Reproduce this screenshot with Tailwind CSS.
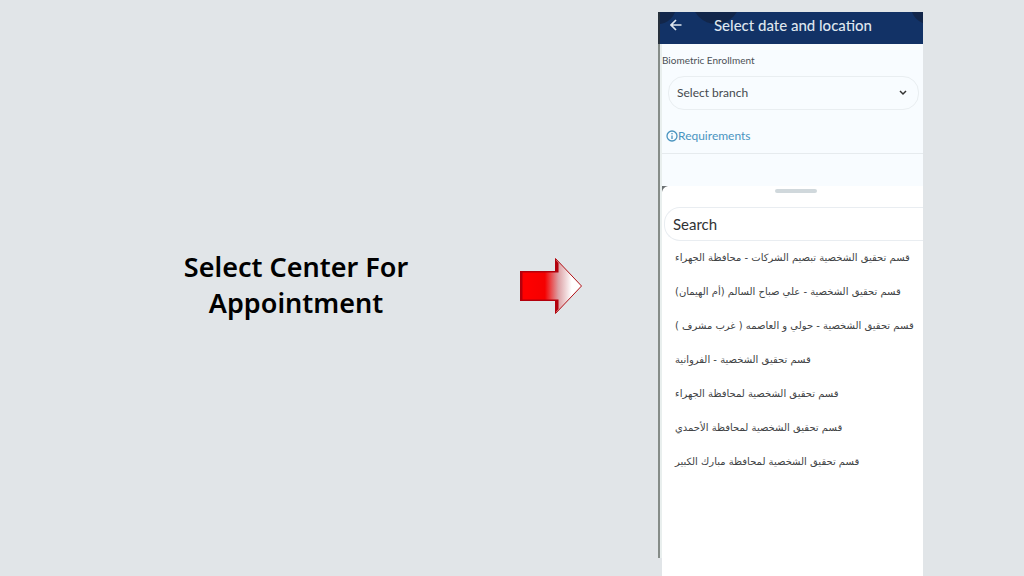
<!DOCTYPE html>
<html lang="en">
	<head>
		<meta charset="utf-8">
		<meta name="viewport" content="width=device-width, initial-scale=1">
		<title>Select Center For Appointment</title>
		<script src="https://cdn.jsdelivr.net/npm/@tailwindcss/browser@4"></script>
	</head>
	<body class="bg-[#e1e5e8] font-[Lato,sans-serif]">
		<main class="grid grid-cols-[1fr_62px_76px_265px_101px] min-h-screen">
			<h1 class="self-center pb-1.5 pl-[72px] text-center text-[27px] leading-9 font-semibold text-black font-['Noto_Sans',sans-serif]">Select Center For<br>Appointment</h1>
			<svg class="mb-1 self-center w-full" viewBox="0 0 62 58" aria-hidden="true">
				<defs>
					<linearGradient id="fill">
						<stop offset="0.1" stop-color="#fe0000" />
						<stop offset="0.4" stop-color="#f50000" />
						<stop offset="0.62" stop-color="#dca0a4" />
						<stop offset="0.84" stop-color="#fff" />
					</linearGradient>
				</defs>
				<path d="M0.500 14.500H35.500V1.500L61.500 29L35.500 56.500V43.500H0.500Z" fill="url(#fill)" stroke="#b01015" />
				<path d="M0 14H35V2L38.500 6V15.500H2.500V42.500H38.500V52L35 56V44H0Z" fill="#b3000c" />
			</svg>
			<!-- phone -->
			<section class="col-start-4 flex pt-3">
				<div class="w-1 mb-[18px] border-l-2 border-[#858c88] bg-[#e9efee]"></div>
				<div class="flex flex-1 flex-col min-w-0 bg-white">
					<header class="relative -ml-1 flex h-8 items-center overflow-hidden border-l-2 border-[#26303c] bg-[#123266] pb-1.5 text-[#dfe6ee]">
						<span class="absolute -top-6 -left-5 size-9 rounded-full bg-[#12264a]"></span>
						<span class="absolute -top-9 left-8 size-12 rounded-full bg-[#12264a]"></span>
						<span class="absolute -top-6 -right-6 size-9 rounded-full bg-[#12264a]"></span>
						<button class="relative ml-1.5 p-1" aria-label="Back">
							<svg class="size-3" viewBox="0 0 12 12" fill="none" stroke="currentColor" stroke-width="1.700"><path d="M11.500 6H1M6 1L1 6L6 11" /></svg>
						</button>
						<h2 class="relative ml-7 text-[15px] leading-6 font-medium">Select date and location</h2>
					</header>
					<form class="flex flex-col bg-[#f8fcff] pb-8 text-[#4b5056]">
						<label for="branch" class="mt-2 text-[10px] leading-4">Biometric Enrollment</label>
						<div class="relative mt-2 ml-1.5 mr-1">
							<select id="branch" class="h-[34px] w-full appearance-none rounded-2xl border border-[#e9eef1] px-2 text-xs text-[#45494e]"><option>Select branch</option></select>
							<svg class="pointer-events-none absolute top-3 right-3 size-2" viewBox="0 0 8 8" fill="none" stroke="#333" stroke-width="1.500"><path d="M1 3L4 6L7 3" /></svg>
						</div>
						<div class="mt-4 flex items-center border-b border-[#e6ebee] pb-[7px] pl-1 text-[#4a94bf]">
							<svg class="size-3" viewBox="0 0 12 12" fill="none" stroke="currentColor" stroke-width="1.300"><circle cx="6" cy="6" r="5" /><path d="M6 5.500V9M6 3V4.300" /></svg>
							<a href="#" class="text-xs leading-5">Requirements</a>
						</div>
					</form>
					<div class="relative flex-1">
						<svg class="absolute top-0 left-0 size-1.5" viewBox="0 0 6 6"><path d="M0 0H6Q1 1 0 6Z" fill="#6c7173" /></svg>
						<div class="ml-[113px] mt-[3px] h-1 w-[42px] rounded-full bg-[#d0d8dc]"></div>
						<div class="mt-3.5 overflow-hidden pl-0.5">
							<input type="text" aria-label="Search" placeholder="Search" class="h-[34px] w-full rounded-l-2xl border border-r-0 border-[#e9edf1] px-2 text-[15px] placeholder:text-[#303234]">
						</div>
						<ul class="pl-[13px] text-[10px] leading-[34px] whitespace-nowrap text-[#414345] font-['DejaVu_Sans',sans-serif]" lang="ar">
							<li><bdi>قسم تحقيق الشخصية تبصيم الشركات - محافظة الجهراء</bdi></li>
							<li><bdi>قسم تحقيق الشخصية - علي صباح السالم (أم الهيمان)</bdi></li>
							<li><bdi>قسم تحقيق الشخصية - حولي و العاصمه ( غرب مشرف )</bdi></li>
							<li><bdi>قسم تحقيق الشخصية - الفروانية</bdi></li>
							<li><bdi>قسم تحقيق الشخصية لمحافظة الجهراء</bdi></li>
							<li><bdi>قسم تحقيق الشخصية لمحافظة الأحمدي</bdi></li>
							<li><bdi>قسم تحقيق الشخصية لمحافظة مبارك الكبير</bdi></li>
						</ul>
					</div>
				</div>
			</section>
		</main>
	</body>
</html>
